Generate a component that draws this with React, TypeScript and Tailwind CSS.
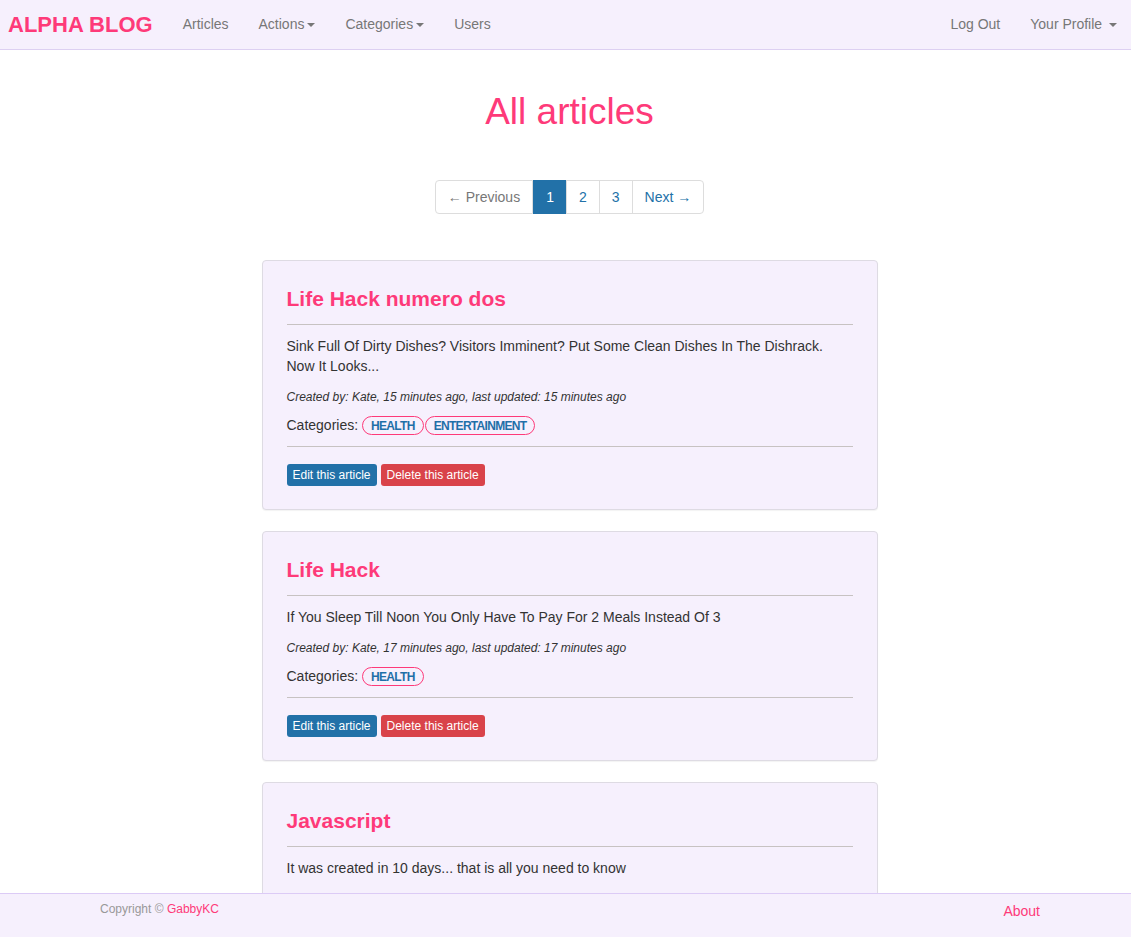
const pink = 'text-[#fe3a79]';

type Article = {
	title: string;
	body: string[];
	author: string;
	created: string;
	updated: string;
	categories: string[];
};

const articles: Article[] = [
	{
		title: 'Life Hack numero dos',
		body: [
			'Sink Full Of Dirty Dishes? Visitors Imminent? Put Some Clean Dishes In The Dishrack.',
			'Now It Looks...',
		],
		author: 'Kate',
		created: '15 minutes',
		updated: '15 minutes',
		categories: ['HEALTH', 'ENTERTAINMENT'],
	},
	{
		title: 'Life Hack',
		body: ['If You Sleep Till Noon You Only Have To Pay For 2 Meals Instead Of 3'],
		author: 'Kate',
		created: '17 minutes',
		updated: '17 minutes',
		categories: ['HEALTH'],
	},
	{
		title: 'Javascript',
		body: ['It was created in 10 days... that is all you need to know'],
		author: 'GabbyKC',
		created: 'about 1 hour',
		updated: 'about 1 hour',
		categories: ['TECH'],
	},
];

const Caret = () => (
	<span className="ml-[3px] inline-block h-0 w-0 border-x-[4px] border-t-[4px] border-x-transparent border-t-[#777] align-middle" />
);

const NavBar = () => (
	<nav className="flex h-[50px] items-center border-b border-[#ddd0f2] bg-[#f6f0fd] text-[14px] text-[#777]">
		<a className={`pl-[8px] pr-[15px] text-[22px] font-bold ${pink}`}>ALPHA BLOG</a>
		<div className="flex">
			<a className="px-[15px]">Articles</a>
			<a className="px-[15px]">
				Actions
				<Caret />
			</a>
			<a className="px-[15px]">
				Categories
				<Caret />
			</a>
			<a className="px-[15px]">Users</a>
		</div>
		<div className="ml-auto flex pr-[14px]">
			<a className="px-[15px]">Log Out</a>
			<a className="pl-[15px]">
				Your Profile <Caret />
			</a>
		</div>
	</nav>
);

const Pagination = () => (
	<div className="flex justify-center">
		<div className="flex h-[34px] text-[14px] text-[#2271a8]">
			<span className="flex items-center rounded-l-[4px] border border-[#ddd] px-[12px] text-[#777]">← Previous</span>
			<span className="flex items-center border border-[#2271a8] bg-[#2271a8] px-[12px] text-white">1</span>
			<span className="-ml-px flex items-center border border-[#ddd] px-[12px]">2</span>
			<span className="-ml-px flex items-center border border-[#ddd] px-[12px]">3</span>
			<span className="-ml-px flex items-center rounded-r-[4px] border border-[#ddd] px-[12px]">Next →</span>
		</div>
	</div>
);

const ArticleCard = ({ article }: { article: Article }) => (
	<div className="mb-[21px] rounded-[4px] border border-[#dedbe3] bg-[#f6f0fd] px-[24px] pt-[26px] pb-[23px] shadow-[0_1px_1px_rgba(0,0,0,0.05)]">
		<h3 className={`text-[21px] leading-[24px] font-bold ${pink}`}>{article.title}</h3>
		<hr className="mt-[13px] border-t border-[#c7c2c2]" />
		<div className="mt-[11px] text-[14px] leading-[20px] text-[#333]">
			{article.body.map((line) => (
				<div key={line}>{line}</div>
			))}
		</div>
		<p className="mt-[12px] text-[12px] leading-[18px] text-[#333] italic">
			Created by: {article.author}, {article.created} ago, last updated: {article.updated} ago
		</p>
		<div className="mt-[9px] flex items-center text-[14px] text-[#333]">
			<span className="mr-[4px]">Categories:</span>
			{article.categories.map((c) => (
				<span
					key={c}
					className="mr-px flex h-[19px] items-center rounded-full border border-[#fe3a79] px-[8px] text-[12px] font-bold tracking-[-0.7px] text-[#1f6fa8]"
				>
					{c}
				</span>
			))}
		</div>
		<hr className="mt-[10px] border-t border-[#c7c2c2]" />
		<div className="mt-[17px] flex gap-[4px] text-[12px]">
			<button className="h-[22px] rounded-[3px] bg-[#2271a8] px-[6px] text-white">Edit this article</button>
			<button className="h-[22px] rounded-[3px] bg-[#d9434a] px-[6px] text-white">Delete this article</button>
		</div>
	</div>
);

const Footer = () => (
	<footer className="fixed inset-x-0 bottom-0 flex h-[44px] justify-between border-t border-[#dccbf6] bg-[#f6f0fd] pr-[91px] pl-[100px]">
		<p className="pt-[6px] text-[12px] text-[#999]">
			Copyright © <a className={pink}>GabbyKC</a>
		</p>
		<a className={`pt-[7px] text-[14px] ${pink}`}>About</a>
	</footer>
);

export default function App() {
	return (
		<div className="min-h-screen bg-white font-['Liberation_Sans',Arial,sans-serif]">
			<NavBar />
			<div className="pl-[8px]">
				<h1 className={`mt-[40px] text-center text-[37px] leading-[44px] ${pink}`}>All articles</h1>
				<div className="mt-[46px]">
					<Pagination />
				</div>
				<div className="mx-auto mt-[46px] w-[616px]">
					{articles.map((a) => (
						<ArticleCard key={a.title} article={a} />
					))}
				</div>
			</div>
			<Footer />
		</div>
	);
}
